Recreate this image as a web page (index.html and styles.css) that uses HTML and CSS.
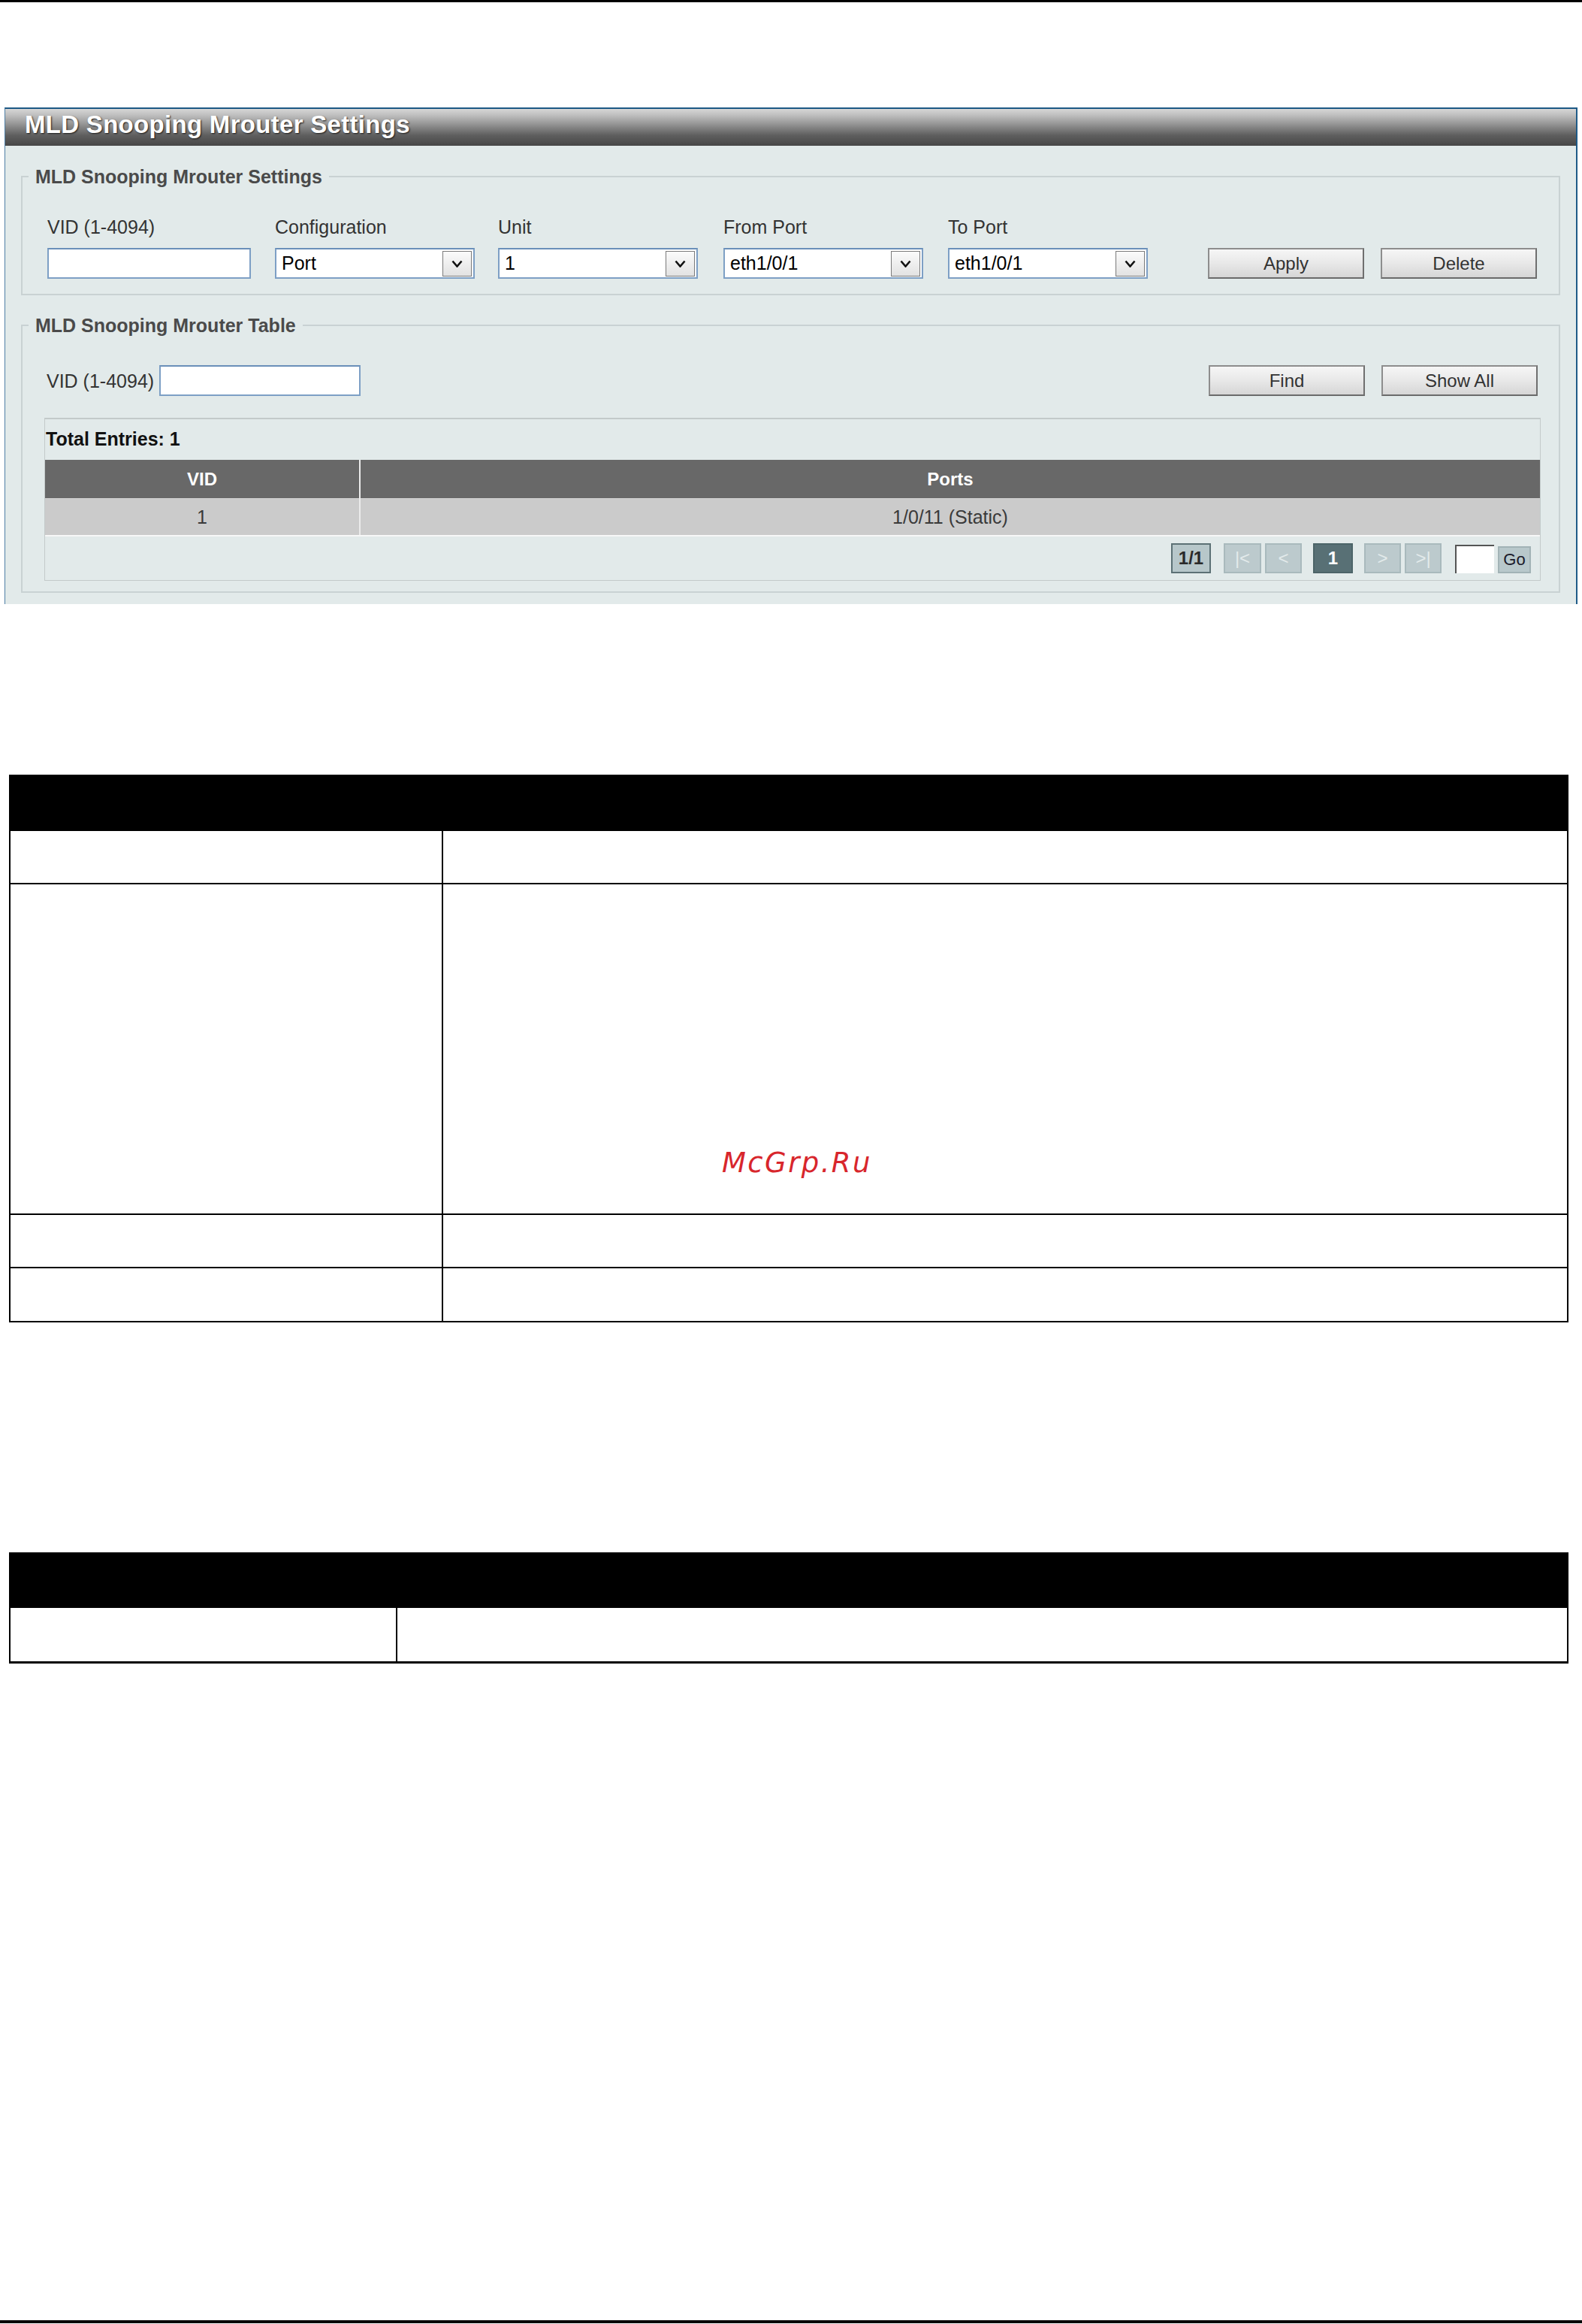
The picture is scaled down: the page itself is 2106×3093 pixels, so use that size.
FILE: index.html
```html
<!DOCTYPE html>
<html>
<head>
<meta charset="utf-8">
<title>MLD Snooping Mrouter Settings</title>
<link rel="stylesheet" href="styles.css">
</head>
<body>
<div class="topline"></div>

<div class="panel">
  <div class="panel-head">MLD Snooping Mrouter Settings</div>
  <div class="panel-body">

    <fieldset class="group g1">
      <legend>MLD Snooping Mrouter Settings</legend>
      <div class="group-inner gi1">
        <div class="form-grid">
          <div class="lbl">VID (1-4094)</div>
          <div class="lbl">Configuration</div>
          <div class="lbl">Unit</div>
          <div class="lbl">From Port</div>
          <div class="lbl">To Port</div>
          <div></div>
          <div></div>

          <div class="txt w271"></div>
          <div class="sel"><span class="sel-val">Port</span><span class="arr"><svg width="15" height="10" viewBox="0 0 15 10"><polyline points="1.5,1.5 7.5,8.5 13.5,1.5" fill="none" stroke="#111" stroke-width="2.6"/></svg></span></div>
          <div class="sel"><span class="sel-val">1</span><span class="arr"><svg width="15" height="10" viewBox="0 0 15 10"><polyline points="1.5,1.5 7.5,8.5 13.5,1.5" fill="none" stroke="#111" stroke-width="2.6"/></svg></span></div>
          <div class="sel"><span class="sel-val">eth1/0/1</span><span class="arr"><svg width="15" height="10" viewBox="0 0 15 10"><polyline points="1.5,1.5 7.5,8.5 13.5,1.5" fill="none" stroke="#111" stroke-width="2.6"/></svg></span></div>
          <div class="sel"><span class="sel-val">eth1/0/1</span><span class="arr"><svg width="15" height="10" viewBox="0 0 15 10"><polyline points="1.5,1.5 7.5,8.5 13.5,1.5" fill="none" stroke="#111" stroke-width="2.6"/></svg></span></div>
          <div class="btn">Apply</div>
          <div class="btn">Delete</div>
        </div>
      </div>
    </fieldset>

    <fieldset class="group g2">
      <legend>MLD Snooping Mrouter Table</legend>
      <div class="group-inner gi2">
        <div class="find-row">
          <div class="lbl lbl-inline">VID (1-4094)</div>
          <div class="txt w268"></div>
          <div class="btns">
            <div class="btn">Find</div>
            <div class="btn">Show All</div>
          </div>
        </div>

        <div class="result-box">
          <div class="total">Total Entries: 1</div>
          <table class="grid">
            <tr><th class="c-vid">VID</th><th>Ports</th></tr>
            <tr><td class="c-vid">1</td><td>1/0/11 (Static)</td></tr>
          </table>
          <div class="pager">
            <div class="pg pg-count">1/1</div>
            <div class="pg pg-off pg-gap">|&lt;</div>
            <div class="pg pg-off">&lt;</div>
            <div class="pg pg-cur pg-gap2">1</div>
            <div class="pg pg-off pg-gap2">&gt;</div>
            <div class="pg pg-off">&gt;|</div>
            <div class="pg-input"></div>
            <div class="pg-go">Go</div>
          </div>
        </div>
      </div>
    </fieldset>

  </div>
</div>

<div class="doc-table t1">
  <div class="dt-head"></div>
  <div class="dt-row h69"><div class="dt-c1 w574"></div><div class="dt-c2"></div></div>
  <div class="dt-row h438 bt"><div class="dt-c1 w574"></div><div class="dt-c2"></div></div>
  <div class="dt-row h69 bt"><div class="dt-c1 w574"></div><div class="dt-c2"></div></div>
  <div class="dt-row h70 bt"><div class="dt-c1 w574"></div><div class="dt-c2"></div></div>
  <div class="watermark">McGrp.Ru</div>
</div>

<div class="doc-table t2">
  <div class="dt-head h72"></div>
  <div class="dt-row h71"><div class="dt-c1 w513"></div><div class="dt-c2"></div></div>
</div>

<div class="bottomline"></div>
</body>
</html>
```

FILE: styles.css
```css
html, body {
  margin: 0;
  padding: 0;
  background: #ffffff;
}
body {
  width: 2106px;
  font-family: "Liberation Sans", Arial, sans-serif;
  color: #333333;
}

.topline {
  height: 3px;
  background: #000;
}

/* ---------- panel ---------- */
.panel {
  margin: 140px 0 0 6px;
  width: 2094px;
  box-sizing: border-box;
  border-top: 2px solid #1c5885;
  border-left: 1px solid #4f7fa6;
  border-right: 2px solid #1f5b88;
  background: #e2eaea;
}
.panel-head {
  height: 49px;
  line-height: 42px;
  padding-left: 26px;
  background: linear-gradient(to bottom, #d6d6d6 0%, #c2c2c2 15%, #979797 40%, #5e5e5e 72%, #474747 100%);
  color: #ffffff;
  font-weight: bold;
  font-size: 33px;
  letter-spacing: 0.3px;
  text-shadow: 1px 1px 2px #1a1a1a;
  white-space: nowrap;
}
.panel-body {
  padding: 0 21px 15px 21px;
}

/* ---------- fieldsets ---------- */
.group {
  margin: 0;
  padding: 0;
  border: 2px solid #c9d2d3;
  min-width: 0;
}
.g1 { margin-top: 27px; }
.g2 { margin-top: 26px; }
.group legend {
  margin-left: 8px;
  padding: 0 9px;
  font-size: 25px;
  line-height: 28px;
  font-weight: bold;
  color: #4a4a4a;
}
.gi1 { padding: 40px 28px 20px 33px; }
.gi2 { padding: 39px 24px 14px 29px; }

.lbl {
  font-size: 25px;
  line-height: 26px;
  color: #333333;
  white-space: nowrap;
}

.form-grid {
  display: grid;
  grid-template-columns: 303px 297px 300px 299px 346px 230px 208px;
  grid-template-rows: 26px 41px;
  row-gap: 15px;
}

.txt {
  height: 41px;
  box-sizing: border-box;
  background: #ffffff;
  border: 2px solid #7d9fc5;
  border-top-color: #6a8fb9;
}
.w271 { width: 271px; }
.w268 { width: 268px; }

.sel {
  width: 266px;
  height: 41px;
  box-sizing: border-box;
  background: #ffffff;
  border: 2px solid #7d9fc5;
  border-top-color: #6a8fb9;
  display: flex;
  align-items: center;
  padding-left: 7px;
}
.sel-val {
  font-size: 25px;
  color: #000000;
  flex: 1;
  white-space: nowrap;
}
.arr {
  width: 39px;
  height: 34px;
  margin-right: 2px;
  margin-top: 1px;
  box-sizing: border-box;
  border: 1px solid #7a7a7a;
  background: linear-gradient(to bottom, #fbfbfb, #e2e2e2);
  display: flex;
  align-items: center;
  justify-content: center;
}

.btn {
  width: 208px;
  height: 41px;
  box-sizing: border-box;
  border: 2px solid #8d8d8d;
  border-right-color: #6f6f6f;
  border-bottom-color: #6a6a6a;
  background: linear-gradient(to bottom, #f6f6f6 0%, #e8e8e8 50%, #d6d6d6 100%);
  font-size: 24px;
  color: #333333;
  display: flex;
  align-items: center;
  justify-content: center;
}

/* ---------- find row ---------- */
.find-row {
  display: flex;
  align-items: center;
  padding: 0 4px 0 3px;
  height: 41px;
}
.lbl-inline { width: 150px; }
.btns {
  margin-left: auto;
  display: flex;
  gap: 22px;
}

/* ---------- result box ---------- */
.result-box {
  margin-top: 29px;
  border: 1px solid #c3caca;
  border-width: 2px 1px 1px 1px;
}
.total {
  padding: 12px 0 0 1px;
  height: 42px;
  box-sizing: border-box;
  font-size: 25px;
  line-height: 28px;
  font-weight: bold;
  color: #111111;
}
.grid {
  width: 100%;
  border-collapse: collapse;
  margin-top: 12px;
  font-size: 25px;
}
.grid th {
  height: 51px;
  padding: 0;
  background: #686868;
  color: #ffffff;
  font-size: 24px;
  font-weight: bold;
  text-align: center;
  border-bottom: 1px solid #d5d5d5;
}
.grid td {
  height: 48px;
  padding: 0;
  background: #cbcbcb;
  color: #3a3a3a;
  text-align: center;
  border-bottom: 2px solid #f7f7f7;
}
.grid .c-vid {
  width: 418px;
  border-right: 2px solid #ebebeb;
}

.pager {
  display: flex;
  justify-content: flex-end;
  align-items: flex-end;
  padding: 9px 12px 9px 0;
}
.pg {
  height: 40px;
  box-sizing: border-box;
  border: 2px solid #a9babd;
  background: #bccacd;
  font-size: 24px;
  display: flex;
  align-items: center;
  justify-content: center;
}
.pg-count {
  width: 53px;
  border-color: #5c7175;
  background: #b7c7ca;
  color: #2a2a2a;
  font-weight: bold;
}
.pg-off {
  width: 49px;
  margin-left: 5px;
  color: #e3eaeb;
}
.pg-gap { margin-left: 17px; width: 50px; }
.pg-gap2 { margin-left: 15px; }
.pg-cur {
  width: 53px;
  background: #587075;
  border-color: #4c6468;
  color: #ffffff;
  font-weight: bold;
}
.pg-input {
  width: 52px;
  height: 38px;
  margin-left: 18px;
  box-sizing: border-box;
  background: #ffffff;
  border-top: 2px solid #555555;
  border-left: 2px solid #555555;
}
.pg-go {
  width: 44px;
  height: 36px;
  margin-left: 5px;
  box-sizing: border-box;
  border: 2px solid #a2b3b6;
  background: #b8c8cb;
  color: #1b1b2b;
  font-size: 22px;
  display: flex;
  align-items: center;
  justify-content: center;
}

/* ---------- document tables ---------- */
.doc-table {
  position: relative;
  margin-left: 12px;
  width: 2076px;
  box-sizing: border-box;
  border: 2px solid #000000;
}
.t1 { margin-top: 227px; }
.t2 { margin-top: 306px; border-bottom-width: 3px; }
.dt-head {
  height: 73px;
  background: #000000;
}
.dt-head.h72 { height: 72px; }
.dt-row {
  display: flex;
}
.dt-row.bt { border-top: 2px solid #000000; }
.h69 { height: 69px; }
.h70 { height: 70px; }
.h71 { height: 71px; }
.h438 { height: 438px; }
.dt-c1 {
  border-right: 2px solid #000000;
}
.w574 { width: 574px; }
.w513 { width: 513px; }
.dt-c2 { flex: 1; }

.watermark {
  position: absolute;
  left: 947px;
  top: 496px;
  font-family: "DejaVu Sans", sans-serif;
  font-style: italic;
  font-size: 37px;
  line-height: 1;
  letter-spacing: 2.4px;
  color: #d8262c;
  white-space: nowrap;
}

.bottomline {
  margin-top: 874px;
  height: 4px;
  background: #000000;
}
```
